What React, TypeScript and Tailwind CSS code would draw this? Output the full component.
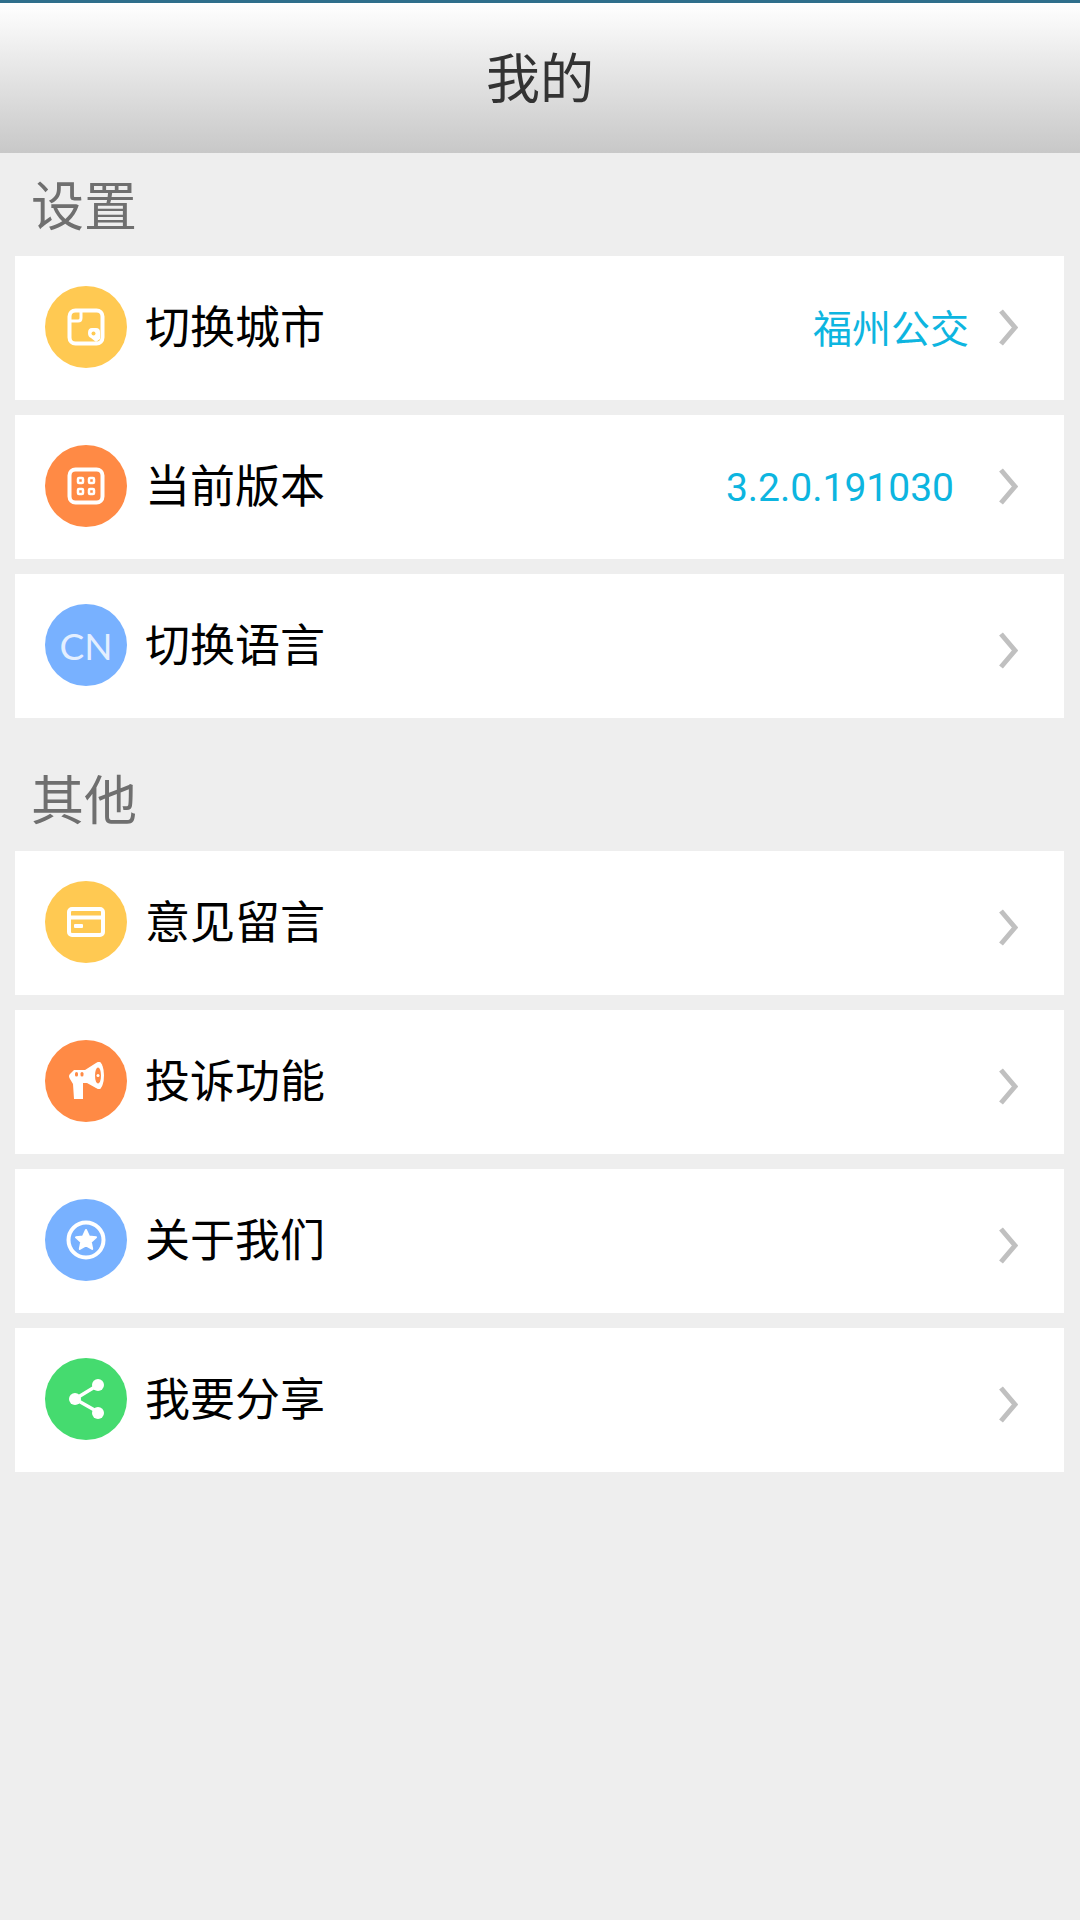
const CJK = "font-['Noto_Sans_CJK_SC','Noto_Sans',sans-serif]";

// all glyphs share a 62x62 box centred in the 82px circle
function CityIcon() {
    return (
        <svg viewBox="0 0 62 62" className="size-[62px]">
            <rect x="14.5" y="14.5" width="33" height="33" rx="6" fill="none" stroke="#fff" strokeWidth="4" />
            <path d="M15 25 H23 Q26 25 26 22 V15" fill="none" stroke="#fff" strokeWidth="3" />
            <path d="M33 37 Q33 32 37 32 H41 Q45 32 45 36 V43 L41 46 L36 42 Q33 41 33 37 Z" fill="#fff" />
            <circle cx="38.5" cy="37.5" r="2" fill="#ffc952" />
        </svg>
    );
}

function VersionIcon() {
    return (
        <svg viewBox="0 0 62 62" className="size-[62px]">
            <rect x="14.5" y="14.5" width="33" height="33" rx="6" fill="none" stroke="#fff" strokeWidth="4" />
            <rect x="23" y="23" width="5" height="5" rx="1" fill="none" stroke="#fff" strokeWidth="2.5" />
            <rect x="34" y="23" width="5" height="5" rx="1" fill="none" stroke="#fff" strokeWidth="2.5" />
            <rect x="23" y="34" width="5" height="5" rx="1" fill="none" stroke="#fff" strokeWidth="2.5" />
            <rect x="34" y="34" width="5" height="5" rx="1" fill="none" stroke="#fff" strokeWidth="2.5" />
        </svg>
    );
}

function CardIcon() {
    return (
        <svg viewBox="0 0 62 62" className="size-[62px]">
            <rect x="14" y="18" width="34" height="26" rx="3" fill="none" stroke="#fff" strokeWidth="4" />
            <rect x="14" y="24.5" width="34" height="4" fill="#fff" />
            <rect x="19" y="33" width="9" height="4" rx="1" fill="#fff" />
        </svg>
    );
}

function HornIcon() {
    return (
        <svg viewBox="0 0 62 62" className="size-[62px]">
            <path d="M19 20 H30 L41 13 Q44 11 46 13 V38 Q44 40 41 38 L32 33 H28 L28 49 H19 L18 34 L15 29 Q13 26 15 24 Z" fill="#fff" />
            <ellipse cx="44" cy="25.5" rx="5" ry="13.5" fill="#fff" />
            <ellipse cx="43" cy="25.5" rx="3" ry="8" fill="#ff8a45" />
            <circle cx="43" cy="25.5" r="1.5" fill="#fff" />
            <rect x="20" y="22" width="3" height="4.5" rx="1.5" fill="#ff8a45" />
            <rect x="25.5" y="22" width="3" height="4.5" rx="1.5" fill="#ff8a45" />
        </svg>
    );
}

function StarIcon() {
    return (
        <svg viewBox="0 0 62 62" className="size-[62px]">
            <circle cx="31" cy="31" r="17.5" fill="none" stroke="#fff" strokeWidth="4" />
            <path d="M31 21 L34 27.5 L41 28.3 L35.8 33 L37.2 40 L31 36.5 L24.8 40 L26.2 33 L21 28.3 L28 27.5 Z" fill="#fff" stroke="#fff" strokeWidth="2" strokeLinejoin="round" />
        </svg>
    );
}

function ShareIcon() {
    return (
        <svg viewBox="0 0 62 62" className="size-[62px]">
            <path d="M20 31 L43 17 M20 31 L43 44" stroke="#fff" strokeWidth="3.5" fill="none" />
            <circle cx="20" cy="31" r="6" fill="#fff" />
            <circle cx="43" cy="17" r="6" fill="#fff" />
            <circle cx="43" cy="45" r="6" fill="#fff" />
        </svg>
    );
}

function Chevron({ className = "" }: { className?: string }) {
    return (
        <svg viewBox="0 0 20 37" className={"w-[20px] h-[37px] shrink-0 " + className}>
            <path d="M3 2 L17 18.5 L3 35" fill="none" stroke="#c0c0c0" strokeWidth="5" />
        </svg>
    );
}

interface RowProps {
    icon: React.ReactNode;
    color: string;
    label: string;
    value?: React.ReactNode;
    chevronClass?: string;
}

function Row({ icon, color, label, value, chevronClass = "" }: RowProps) {
    return (
        <div className="flex items-center h-[144px] bg-white pl-[30px] pr-[46px]">
            <div className={"size-[82px] -mt-[2px] rounded-full flex items-center justify-center shrink-0 " + color}>
                {icon}
            </div>
            <span className={"ml-[18px] -mt-[8px] text-[45px] leading-none text-black " + CJK}>{label}</span>
            <div className="flex-1" />
            {value}
            <Chevron className={chevronClass} />
        </div>
    );
}

export default function App() {
    return (
        <div className="w-[1080px] h-[1920px] bg-[#eeeeee] flex flex-col">
            <div className="h-[3px] bg-[#2f6f8c]" />
            <header className="h-[150px] flex items-center justify-center bg-gradient-to-b from-white to-[#c8c8c8]">
                <h1 className={"-mt-[4px] text-[54px] leading-none font-normal text-[#333333] " + CJK}>我的</h1>
            </header>

            <h2 className={"h-[103px] pl-[31px] pt-[14px] text-[53px] leading-[72px] font-normal text-[#6f6f6f] " + CJK}>设置</h2>
            <div className="flex flex-col gap-[15px] pl-[15px] pr-[16px]">
                <Row
                    icon={<CityIcon />}
                    color="bg-[#ffc952]"
                    label="切换城市"
                    value={<span className={"mr-[29px] -mt-[4px] text-[39px] leading-none text-[#0db5e0] " + CJK}>福州公交</span>}
                    chevronClass="-mt-[2px]"
                />
                <Row
                    icon={<VersionIcon />}
                    color="bg-[#ff8a45]"
                    label="当前版本"
                    value={<span className="mr-[44px] mt-[3px] font-['Roboto',sans-serif] text-[39px] leading-none text-[#0db5e0]">3.2.0.191030</span>}
                    chevronClass="-mt-[2px]"
                />
                <Row
                    icon={<span className="font-['Lato',sans-serif] text-[37px] leading-none text-[#e4efff]">CN</span>}
                    color="bg-[#78b1ff]"
                    label="切换语言"
                    chevronClass="mt-[8px]"
                />
            </div>

            <h2 className={"h-[133px] pl-[31px] pt-[43px] text-[53px] leading-[72px] font-normal text-[#6f6f6f] " + CJK}>其他</h2>
            <div className="flex flex-col gap-[15px] pl-[15px] pr-[16px]">
                <Row icon={<CardIcon />} color="bg-[#ffc952]" label="意见留言" chevronClass="mt-[8px]" />
                <Row icon={<HornIcon />} color="bg-[#ff8a45]" label="投诉功能" chevronClass="mt-[8px]" />
                <Row icon={<StarIcon />} color="bg-[#78b1ff]" label="关于我们" chevronClass="mt-[8px]" />
                <Row icon={<ShareIcon />} color="bg-[#45db6f]" label="我要分享" chevronClass="mt-[8px]" />
            </div>
        </div>
    );
}
